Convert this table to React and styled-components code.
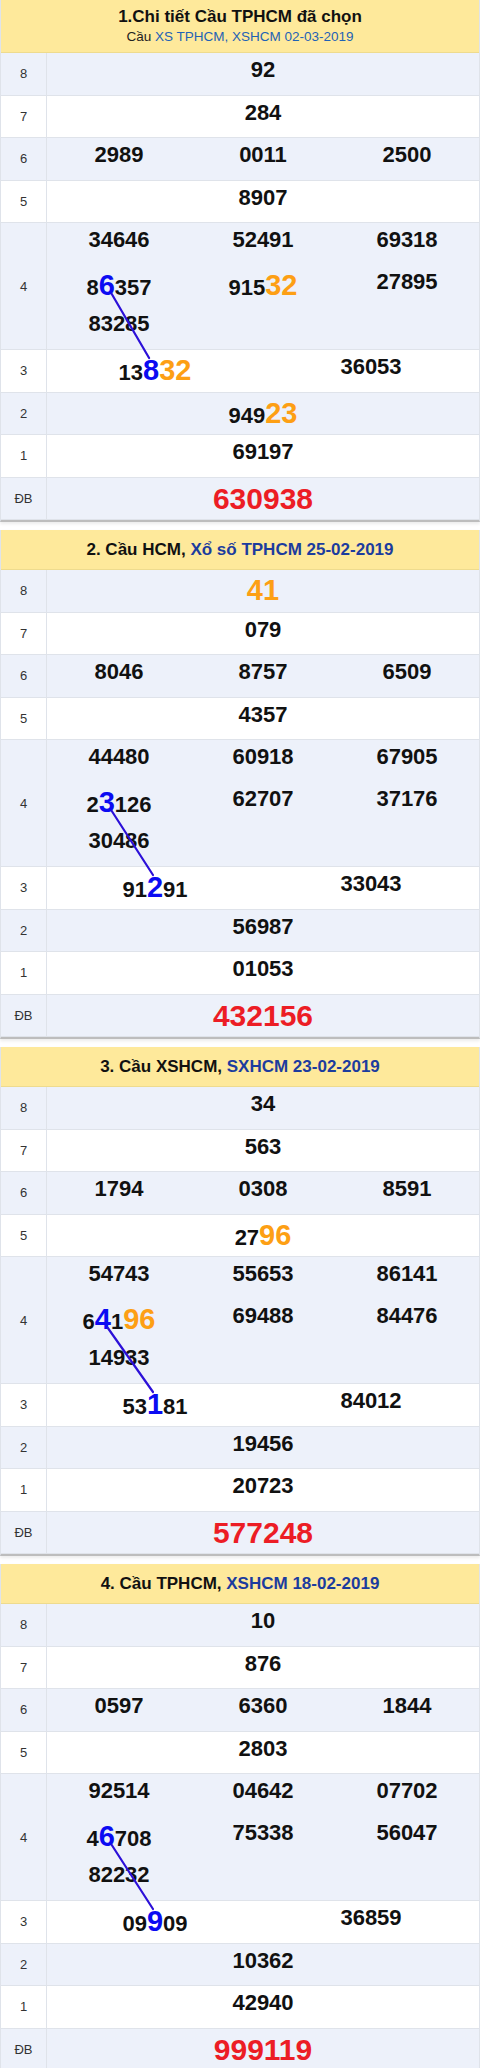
import React, { useLayoutEffect, useRef, useState } from "react";
import styled, { createGlobalStyle } from "styled-components";

const GlobalStyle = createGlobalStyle`
  body {
    margin: 0;
    background: #fff;
    font-family: "Liberation Sans", Arial, sans-serif;
  }
`;

// <x> = blue bridge digit, {x} = gold pair
const sections = [
  {
    heading: [{ t: "1.Chi tiết Cầu TPHCM đã chọn" }],
    sub: [{ t: "Cầu " }, { t: "XS TPHCM, XSHCM 02-03-2019", blue: true }],
    g8: "92",
    g7: "284",
    g6: ["2989", "0011", "2500"],
    g5: "8907",
    g4: [["34646", "8<6>357", "83285"], ["52491", "915{32}"], ["69318", "27895"]],
    g3: ["13<8>{32}", "36053"],
    g2: "949{23}",
    g1: "69197",
    db: "630938",
  },
  {
    heading: [{ t: "2. Cầu HCM, " }, { t: "Xổ số TPHCM 25-02-2019", blue: true }],
    g8: "{41}",
    g7: "079",
    g6: ["8046", "8757", "6509"],
    g5: "4357",
    g4: [["44480", "2<3>126", "30486"], ["60918", "62707"], ["67905", "37176"]],
    g3: ["91<2>91", "33043"],
    g2: "56987",
    g1: "01053",
    db: "432156",
  },
  {
    heading: [{ t: "3. Cầu XSHCM, " }, { t: "SXHCM 23-02-2019", blue: true }],
    g8: "34",
    g7: "563",
    g6: ["1794", "0308", "8591"],
    g5: "27{96}",
    g4: [["54743", "6<4>1{96}", "14933"], ["55653", "69488"], ["86141", "84476"]],
    g3: ["53<1>81", "84012"],
    g2: "19456",
    g1: "20723",
    db: "577248",
  },
  {
    heading: [{ t: "4. Cầu TPHCM, " }, { t: "XSHCM 18-02-2019", blue: true }],
    g8: "10",
    g7: "876",
    g6: ["0597", "6360", "1844"],
    g5: "2803",
    g4: [["92514", "4<6>708", "82232"], ["04642", "75338"], ["07702", "56047"]],
    g3: ["09<9>09", "36859"],
    g2: "10362",
    g1: "42940",
    db: "999119",
  },
];

const split = (s) =>
  s
    .split(/(<[^>]+>|\{[^}]+\})/)
    .filter(Boolean)
    .map((p) =>
      p[0] === "<"
        ? { t: p.slice(1, -1), tone: "blue" }
        : p[0] === "{"
        ? { t: p.slice(1, -1), tone: "gold" }
        : { t: p }
    );

const Wrap = styled.div`
  width: 480px;
`;

const Block = styled.section`
  position: relative;
  border-left: 1px solid #dfe3ea;
  border-right: 1px solid #dfe3ea;
  border-bottom: 2px solid #bdbdbd;
  box-shadow: 0 2px 3px rgba(0, 0, 0, 0.08);
  margin-bottom: 8px;
`;

const Header = styled.div`
  background: #fee99b;
  height: ${(p) => (p.$tall ? 53 : 40)}px;
  display: flex;
  flex-direction: column;
  align-items: center;
  justify-content: center;
  border-bottom: 1px solid #eedb8e;
  box-sizing: border-box;
`;

const Heading = styled.div`
  font-size: 17px;
  font-weight: 700;
  color: #111;
  line-height: 20px;
`;

const Sub = styled.div`
  font-size: 13.5px;
  color: #222;
  line-height: 17px;
  margin-top: 1px;
`;

const Tint = styled.span`
  color: ${(p) => (p.$light ? "#1f62b5" : "#1c3c9e")};
`;

const Row = styled.div`
  display: grid;
  grid-template-columns: 46px 1fr;
  background: ${(p) => (p.$alt ? "#edf1fa" : "#fff")};
  border-bottom: 1px solid #dfe3ea;
  &:last-child {
    border-bottom: none;
  }
`;

const Label = styled.div`
  display: flex;
  align-items: center;
  justify-content: center;
  border-right: 1px solid #dfe3ea;
  font-size: 13px;
  color: #333;
`;

const Values = styled.div`
  display: grid;
  grid-template-columns: repeat(${(p) => p.$cols}, 1fr);
`;

const Line = styled.div`
  height: ${(p) => (p.$stack ? 42 : 41.5)}px;
  line-height: 34px;
  text-align: center;
  white-space: nowrap;
  font-size: 22px;
  font-weight: 700;
  color: #111;
`;

const Big = styled.span`
  font-size: 29px;
  line-height: 41px;
  font-weight: 700;
  color: ${(p) => (p.$tone === "blue" ? "#0b0bf2" : "#fd9f14")};
`;

const Special = styled.span`
  font-size: 30px;
  line-height: 41px;
  font-weight: 700;
  color: #ec1d25;
`;

const Overlay = styled.svg`
  position: absolute;
  left: 0;
  top: 0;
  pointer-events: none;
`;

function Num({ value, mark }) {
  return split(value).map((p, i) =>
    p.tone ? (
      <Big key={i} $tone={p.tone} ref={p.tone === "blue" ? mark : undefined}>
        {p.t}
      </Big>
    ) : (
      <React.Fragment key={i}>{p.t}</React.Fragment>
    )
  );
}

function Prize({ label, alt, cols = 1, children }) {
  return (
    <Row $alt={alt}>
      <Label>{label}</Label>
      <Values $cols={cols}>{children}</Values>
    </Row>
  );
}

function Section({ data, first }) {
  const boxRef = useRef(null);
  const marks = useRef([]);
  const [link, setLink] = useState(null);

  useLayoutEffect(() => {
    const measure = () => {
      const box = boxRef.current.getBoundingClientRect();
      const [a, b] = marks.current;
      if (!a || !b) return;
      const ra = a.getBoundingClientRect();
      const rb = b.getBoundingClientRect();
      setLink({
        x1: ra.left + ra.width / 2 + 4 - box.left,
        y1: ra.bottom - 7 - box.top,
        x2: rb.left + rb.width / 2 - 3 - box.left,
        y2: rb.top + 4 - box.top,
        w: box.width,
        h: box.height,
      });
    };
    measure();
    if (document.fonts) document.fonts.ready.then(measure);
  }, []);

  const markAt = (i) => (el) => {
    if (el) marks.current[i] = el;
  };

  return (
    <Block ref={boxRef}>
      <Header $tall={first}>
        <Heading>
          {data.heading.map((h, i) =>
            h.blue ? <Tint key={i}>{h.t}</Tint> : <span key={i}>{h.t}</span>
          )}
        </Heading>
        {data.sub && (
          <Sub>
            {data.sub.map((h, i) =>
              h.blue ? (
                <Tint key={i} $light>
                  {h.t}
                </Tint>
              ) : (
                <span key={i}>{h.t}</span>
              )
            )}
          </Sub>
        )}
      </Header>

      <Prize label="8" alt>
        <Line><Num value={data.g8} /></Line>
      </Prize>
      <Prize label="7">
        <Line><Num value={data.g7} /></Line>
      </Prize>
      <Prize label="6" alt cols={3}>
        {data.g6.map((n) => (
          <Line key={n}><Num value={n} /></Line>
        ))}
      </Prize>
      <Prize label="5">
        <Line><Num value={data.g5} /></Line>
      </Prize>
      <Prize label="4" alt cols={3}>
        {data.g4.map((col, c) => (
          <div key={c}>
            {col.map((n) => (
              <Line key={n} $stack>
                <Num value={n} mark={markAt(0)} />
              </Line>
            ))}
          </div>
        ))}
      </Prize>
      <Prize label="3" cols={2}>
        {data.g3.map((n) => (
          <Line key={n}><Num value={n} mark={markAt(1)} /></Line>
        ))}
      </Prize>
      <Prize label="2" alt>
        <Line><Num value={data.g2} /></Line>
      </Prize>
      <Prize label="1">
        <Line><Num value={data.g1} /></Line>
      </Prize>
      <Prize label="ĐB" alt>
        <Line><Special>{data.db}</Special></Line>
      </Prize>

      {link && (
        <Overlay width={link.w} height={link.h}>
          <line
            x1={link.x1}
            y1={link.y1}
            x2={link.x2}
            y2={link.y2}
            stroke="#2c10d8"
            strokeWidth="2.2"
            strokeLinecap="round"
          />
        </Overlay>
      )}
    </Block>
  );
}

export default function App() {
  return (
    <Wrap>
      <GlobalStyle />
      {sections.map((s, i) => (
        <Section key={i} data={s} first={i === 0} />
      ))}
    </Wrap>
  );
}
